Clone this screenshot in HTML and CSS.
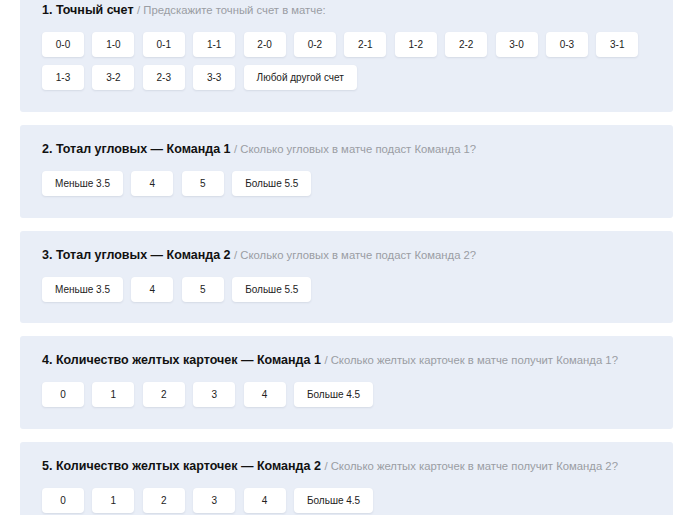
FILE: index.html
```html
<!DOCTYPE html>
<html lang="ru">
<head>
    <meta charset="UTF-8">
    <meta name="viewport" content="width=device-width, initial-scale=1.0">
    <title>Прогнозы на матч</title>
    <link rel="stylesheet" href="styles.css">
</head>
<body>
    <div class="quiz">
        <div class="question">
            <h3 class="question-title">1. Точный счет <span class="question-hint">/ Предскажите точный счет в матче:</span></h3>
            <div class="options">
                <button class="option">0-0</button>
                <button class="option">1-0</button>
                <button class="option">0-1</button>
                <button class="option">1-1</button>
                <button class="option">2-0</button>
                <button class="option">0-2</button>
                <button class="option">2-1</button>
                <button class="option">1-2</button>
                <button class="option">2-2</button>
                <button class="option">3-0</button>
                <button class="option">0-3</button>
                <button class="option">3-1</button>
                <button class="option">1-3</button>
                <button class="option">3-2</button>
                <button class="option">2-3</button>
                <button class="option">3-3</button>
                <button class="option">Любой другой счет</button>
            </div>
        </div>

        <div class="question">
            <h3 class="question-title">2. Тотал угловых — Команда 1 <span class="question-hint">/ Сколько угловых в матче подаст Команда 1?</span></h3>
            <div class="options">
                <button class="option">Меньше 3.5</button>
                <button class="option">4</button>
                <button class="option">5</button>
                <button class="option">Больше 5.5</button>
            </div>
        </div>

        <div class="question">
            <h3 class="question-title">3. Тотал угловых — Команда 2 <span class="question-hint">/ Сколько угловых в матче подаст Команда 2?</span></h3>
            <div class="options">
                <button class="option">Меньше 3.5</button>
                <button class="option">4</button>
                <button class="option">5</button>
                <button class="option">Больше 5.5</button>
            </div>
        </div>

        <div class="question">
            <h3 class="question-title">4. Количество желтых карточек — Команда 1 <span class="question-hint">/ Сколько желтых карточек в матче получит Команда 1?</span></h3>
            <div class="options">
                <button class="option">0</button>
                <button class="option">1</button>
                <button class="option">2</button>
                <button class="option">3</button>
                <button class="option">4</button>
                <button class="option">Больше 4.5</button>
            </div>
        </div>

        <div class="question">
            <h3 class="question-title">5. Количество желтых карточек — Команда 2 <span class="question-hint">/ Сколько желтых карточек в матче получит Команда 2?</span></h3>
            <div class="options">
                <button class="option">0</button>
                <button class="option">1</button>
                <button class="option">2</button>
                <button class="option">3</button>
                <button class="option">4</button>
                <button class="option">Больше 4.5</button>
            </div>
        </div>
    </div>
</body>
</html>
```

FILE: styles.css
```css
body {
    font-family: "Liberation Sans", Arial, sans-serif;
    background-color: #fff;
    margin: 0;
    color: #111;
}
.quiz {
    display: flex;
    flex-direction: column;
    gap: 13px;
    padding: 0 19px 0 20px;
    margin-top: -14px;
}
.question {
    background-color: #e9eef7;
    border-radius: 3px;
    padding: 16px 22px 21.7px;
}
.question-title {
    font-size: 12.5px;
    font-weight: bold;
    line-height: 16px;
    margin: 0 0 14px;
}
.question-hint {
    font-size: 11.3px;
    font-weight: normal;
    color: #9a9da3;
}
.options {
    display: flex;
    flex-wrap: wrap;
    gap: 8.4px;
}
.option {
    min-width: 42px;
    height: 25px;
    padding: 0 13px;
    background-color: #fff;
    border: none;
    border-radius: 4px;
    box-shadow: 0 1px 2px rgba(40, 50, 80, 0.1);
    font-family: inherit;
    font-size: 10px;
    color: #222;
    cursor: pointer;
}
.option:hover {
    background-color: #f4f7fc;
}
```
